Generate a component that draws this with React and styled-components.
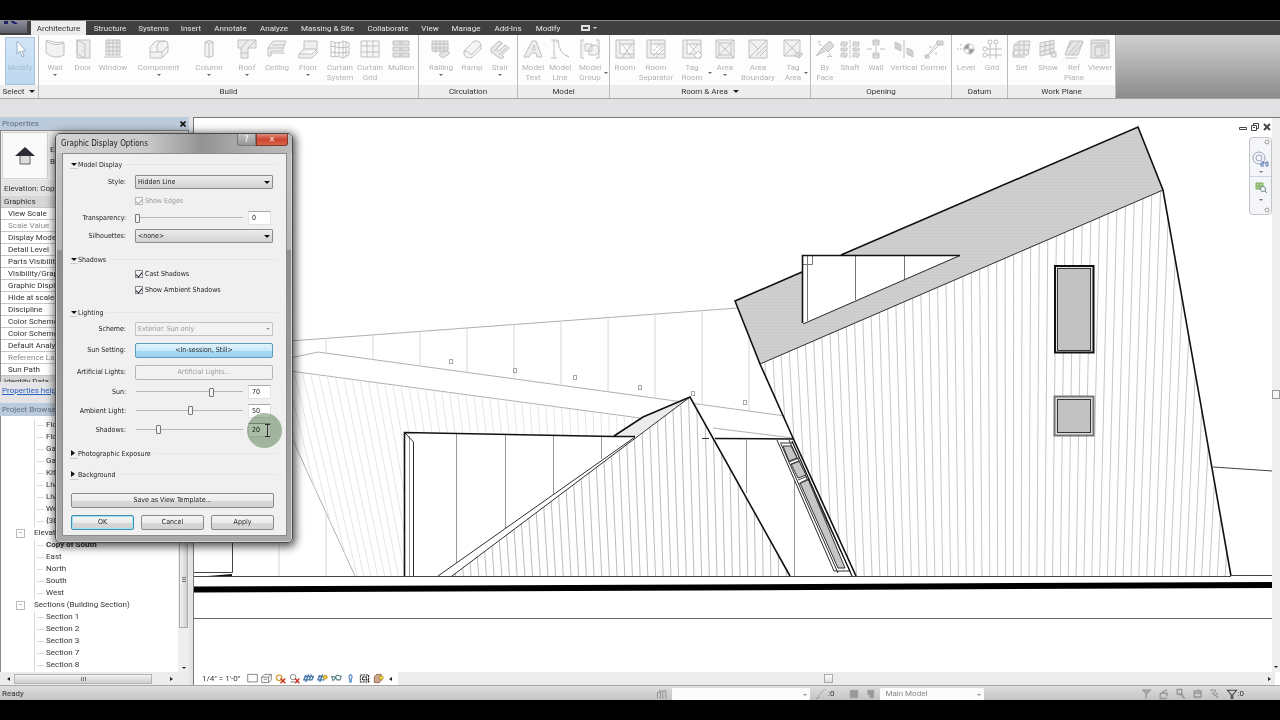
import React from 'react';
import styled, { createGlobalStyle, css } from 'styled-components';

const theme = {
  ui: "Roboto, 'Noto Sans', sans-serif",
  dialog: "'DejaVu Sans Condensed', 'Open Sans', sans-serif",
  disabled: '#b4b4b4',
  text: '#333',
  header: '#bccbdb',
};

const GlobalStyle = createGlobalStyle`
  * {
    box-sizing: border-box;
  }
  body {
    margin: 0;
    background: #000;
    color: ${theme.text};
    font: 8px/12px ${theme.ui};
  }
  button, input, select {
    margin: 0;
    padding: 0;
    border: none;
    border-radius: 0;
    background: none;
    color: inherit;
    font: inherit;
  }
  svg {
    display: block;
  }
`;

const Screen = styled.div`
  display: flex;
  flex-direction: column;
  min-height: 100vh;
  padding: 20px 0;
  overflow: hidden;
`;

/* ---------- ribbon ---------- */

const TabBar = styled.nav`
  display: flex;
  height: 15px;
  background: #404040;
  border-top: 1px solid #8a8a8a;
`;

const AppButton = styled.button`
  width: 27px;
  height: 12px;
  margin-right: 4px;
  overflow: hidden;
  background: linear-gradient(#8d8f9c, #5c5d66);
  svg {
    width: 27px;
    height: 12px;
  }
`;

const Tab = styled.button`
  flex: none;
  width: ${({ $width }) => $width}px;
  height: 14px;
  line-height: 15px;
  color: #e6e6e6;
  white-space: nowrap;
  ${({ $active }) =>
    $active &&
    css`
      color: #333;
      background: #ececec;
    `}
`;

const TabMenu = styled.button`
  display: flex;
  align-items: center;
  gap: 3px;
  margin-left: 12px;
  color: #ddd;
`;

const Ribbon = styled.div`
  display: flex;
  height: 64px;
  border-bottom: 1px solid #a6a6a8;
  background: linear-gradient(#d0d0d0, #8c8c8c);
`;

const Panel = styled.section`
  display: flex;
  flex-direction: column;
  flex: none;
  width: ${({ $width }) => $width}px;
  border-right: 1px solid #bcbcbc;
  background: #fdfdfd;
`;

const PanelTools = styled.div`
  display: flex;
  flex: 1;
  padding-left: ${({ $pad }) => $pad || 0}px;
`;

const PanelTitle = styled.div`
  display: flex;
  align-items: center;
  justify-content: center;
  gap: 5px;
  height: 13px;
  background: #ededed;
`;

const Tool = styled.button`
  position: relative;
  display: flex;
  flex: none;
  flex-direction: column;
  align-items: center;
  width: ${({ $width }) => $width}px;
  padding-top: 4px;
  color: ${theme.disabled};
  line-height: 10px;
  white-space: nowrap;
  svg {
    width: 20px;
    height: 20px;
    margin-bottom: 4px;
    fill: none;
    stroke: #c0c0c0;
  }
`;

const ModifyTool = styled(Tool)`
  height: 48px;
  margin: 2px 0 0 5px;
  padding-top: 1px;
  color: #a9bccf;
  border: 1px solid #a9c3dd;
  background: linear-gradient(#d3e5f7, #bdd8f0);
`;

const Caret = styled.i`
  width: 0;
  height: 0;
  border: ${({ $size }) => $size || 2}px solid transparent;
  border-bottom: none;
  border-top-color: ${({ $color }) => $color || '#222'};
`;

const ToolCaret = styled(Caret)`
  margin-top: 1px;
`;

const SideCaret = styled(Caret)`
  position: absolute;
  right: 0;
  top: 37px;
`;

const OptionsBar = styled.div`
  height: 18px;
  background: #e1e1e3;
`;

/* ---------- workspace ---------- */

const Workspace = styled.main`
  position: relative;
  display: flex;
  flex: 1;
  background: #e4e4e6;
`;

const SidePanel = styled.aside`
  display: flex;
  flex-direction: column;
  flex: none;
  width: 189px;
  margin-right: 4px;
`;

const PanelHeader = styled.header`
  display: flex;
  align-items: center;
  justify-content: space-between;
  flex: none;
  height: 13px;
  padding: 0 3px 0 2px;
  color: #5f6f80;
  background: ${theme.header};
  button {
    width: 6px;
    color: #222;
  }
`;

const Properties = styled.div`
  flex: none;
  height: 252px;
  overflow: hidden;
  border: 1px solid #8a8a8a;
  border-bottom: none;
  background: #fff;
`;

const TypeSelector = styled.div`
  display: flex;
  align-items: center;
  gap: 2px;
  height: 49px;
  padding-left: 1px;
  background: #ececec;
`;

const TypePreview = styled.button`
  display: grid;
  place-items: center;
  width: 46px;
  height: 47px;
  border: 1px solid #d4d4d4;
  background: #fafafa;
`;

const InstanceRow = styled.div`
  height: 16px;
  padding-left: 3px;
  line-height: 17px;
  background: #e4e4e4;
`;

const PropertyTable = styled.table`
  width: 100%;
  border-spacing: 0;
  table-layout: fixed;
`;

const PropertyCell = styled.th`
  height: 12px;
  padding: 0 0 0 7px;
  overflow: hidden;
  line-height: 11px;
  font-weight: normal;
  text-align: left;
  white-space: nowrap;
  color: ${({ $dim }) => ($dim ? '#8c8c8c' : theme.text)};
  border-bottom: 1px solid #c6c6c6;
  ${({ $group }) =>
    $group &&
    css`
      padding-left: 3px;
      background: #d6d6d6;
    `}
`;

const HelpBar = styled.div`
  flex: none;
  height: 21px;
  padding: 3px 2px;
  a {
    color: #2a5fc4;
  }
`;

const Tree = styled.div`
  display: flex;
  flex: 1;
  background: #fff;
  border-left: 1px solid #8a8a8a;
`;

const TreeList = styled.ul`
  flex: 1;
  margin: 0;
  padding: 3px 0 0 15px;
  list-style: none;
`;

const TreeItem = styled.li`
  display: flex;
  align-items: center;
  height: 12px;
  font-weight: ${({ $bold }) => ($bold ? 'bold' : 'normal')};
  &::before {
    content: '${({ $group }) => ($group ? '−' : '')}';
    width: ${({ $group }) => ($group ? 7 : 18)}px;
    height: ${({ $group }) => ($group ? 7 : 12)}px;
    margin-right: ${({ $group }) => ($group ? 9 : 2)}px;
    line-height: 5px;
    text-align: center;
    color: #999;
    border: 0 solid #bbb;
    border-width: ${({ $group }) => ($group ? '1px' : '0 1px 0 0')};
    border-right-color: ${({ $group }) => ($group ? '#bbb' : '#d8d8d8')};
  }
`;

const ItemLine = styled.span`
  width: 7px;
  margin-right: 2px;
  border-top: 1px solid #dcdcdc;
`;

const TreeScroll = styled.div`
  display: flex;
  flex-direction: column;
  align-items: center;
  width: 11px;
  padding-bottom: 3px;
  background: #eee;
  span {
    display: grid;
    place-items: center;
    width: 9px;
    height: 212px;
    margin-bottom: auto;
    padding-top: 114px;
    border: 1px solid #aaa;
    background: linear-gradient(90deg, #f4f4f4, #cfcfcf);
  }
`;

const Grip = styled.i`
  width: ${({ $tall }) => ($tall ? 4 : 5)}px;
  height: ${({ $tall }) => ($tall ? 5 : 4)}px;
  background: repeating-linear-gradient(
    ${({ $tall }) => ($tall ? '180deg' : '90deg')},
    #777 0 1px,
    transparent 1px 2px
  );
`;

const SideScroll = styled.div`
  display: flex;
  align-items: center;
  flex: none;
  height: 13px;
  padding: 0 14px 0 5px;
  background: #ececec;
  div {
    display: grid;
    place-items: center;
    width: 138px;
    height: 10px;
    margin: 0 auto 0 4px;
    border: 1px solid #b4b4b4;
    background: linear-gradient(#f2f2f2, #cecece);
  }
`;

const SideArrow = styled.i`
  width: 0;
  height: 0;
  border: 2px solid transparent;
  border-${({ $left }) => ($left ? 'right' : 'left')}: 3px solid #222;
`;

const View = styled.section`
  display: flex;
  flex-direction: column;
  flex: 1;
  min-width: 0;
  border: 1px solid #777;
  border-width: 1px 0 0 1px;
  background: #fff;
`;

const Sheet = styled.div`
  position: relative;
  display: flex;
  flex: 1;
`;

const Drawing = styled.svg`
  flex: 1;
  min-width: 0;
  width: 100%;
  height: auto;
`;

const ViewScroll = styled.div`
  display: flex;
  flex-direction: column;
  justify-content: space-between;
  align-items: center;
  flex: none;
  width: 8px;
  padding: 3px 0 4px;
  background: #eee;
  span {
    width: 8px;
    height: 9px;
    border: 1px solid #999;
    background: #f6f6f6;
  }
`;

const WindowButtons = styled.div`
  position: absolute;
  top: 5px;
  right: 9px;
  display: flex;
  gap: 4px;
  svg {
    width: 8px;
    height: 8px;
    fill: none;
    stroke: #444;
  }
`;

const NavBar = styled.div`
  position: absolute;
  top: 19px;
  right: 8px;
  width: 23px;
  height: 78px;
  border: 1px solid #c4c4c4;
  border-radius: 4px;
  background: #f4f5f8;
`;

const ViewBar = styled.div`
  display: flex;
  align-items: center;
  gap: 3px;
  flex: none;
  height: 13px;
  padding: 0 5px 0 8px;
  svg {
    width: 11px;
    height: 11px;
    fill: none;
    stroke: #555;
  }
`;

const Scale = styled.button`
  width: 42px;
  text-align: left;
  white-space: nowrap;
`;

const HorizontalTrack = styled.div`
  display: flex;
  align-items: center;
  flex: 1;
  height: 13px;
  margin-left: 3px;
  padding: 0 2px 0 426px;
  background: #ececec;
  span {
    width: 9px;
    height: 9px;
    margin-right: auto;
    border: 1px solid #aaa;
    background: linear-gradient(#fff, #ddd);
  }
`;

const StatusBar = styled.footer`
  display: flex;
  align-items: center;
  flex: none;
  height: 15px;
  padding: 2px 36px 0 2px;
  border-top: 1px solid #a8a8a8;
  background: linear-gradient(#dedede, #c4c4c4);
  svg {
    width: 12px;
    height: 12px;
    fill: none;
    stroke: #999;
  }
`;

const StatusText = styled.span`
  width: 654px;
`;

const StatusGroup = styled.div`
  display: flex;
  align-items: center;
  gap: ${({ $gap }) => $gap}px;
  margin-left: ${({ $left }) => $left};
`;

/* ---------- form parts ---------- */

const SelectBox = styled.div`
  position: relative;
  flex: none;
  width: ${({ $width }) => $width}px;
  height: 14px;
  select {
    width: 100%;
    height: 100%;
    padding-left: 2px;
    appearance: none;
    opacity: 1;
    border: 1px solid ${({ $dim }) => ($dim ? '#c2c2c2' : '#8c8c8c')};
    border-radius: 1px;
    color: ${({ $dim }) => ($dim ? '#999' : '#222')};
    background: ${({ $dim }) => ($dim ? '#f2f2f2' : 'linear-gradient(#ededed, #d2d2d2)')};
  }
  i {
    position: absolute;
    top: 6px;
    right: 3px;
  }
`;

const StatusSelect = styled(SelectBox)`
  height: 12px;
  select {
    padding-left: 5px;
    border: none;
    color: #888;
    background: #fbfbfb;
  }
`;

const Dialog = styled.div`
  position: absolute;
  top: 16px;
  left: 55px;
  width: 238px;
  padding: 0 5px 6px 6px;
  border: 1px solid #4a4a4a;
  border-radius: 5px;
  background: linear-gradient(#c4c4c4 0, #b4b4b4 115px, #8f8f8f 117px, #a9a9a9 100%);
  box-shadow: 1px 2px 8px 2px rgba(0, 0, 0, 0.65), inset 0 0 0 1px #d4d4d4;
  font-family: ${theme.dialog};
  font-size: 7px;
  color: #222;
`;

const TitleBar = styled.header`
  display: flex;
  height: 19px;
  margin: 0 -5px 0 -6px;
  padding: 0 4px 0 5px;
  border-radius: 4px 4px 0 0;
  background: linear-gradient(90deg, #d2d2d2 0, #cacaca 38%, #939393 62%, #a6a6a6 75%, #bcbcbc 100%);
  h1 {
    flex: 1;
    margin: 0;
    font-weight: normal;
    font-size: 8px;
    line-height: 20px;
  }
`;

const TitleButton = styled.button`
  width: ${({ $close }) => ($close ? 32 : 19)}px;
  height: 12px;
  line-height: 10px;
  font-weight: bold;
  font-size: 8px;
  color: #eee;
  border: 1px solid #777;
  border-top: none;
  border-radius: ${({ $close }) => ($close ? '0 0 3px 0' : '0 0 0 3px')};
  background: linear-gradient(#c0c0c0, #969696);
  ${({ $close }) =>
    $close &&
    css`
      background: linear-gradient(#dc8b7c 0, #cc4530 50%, #d9614a 100%);
      border-color: #7c3a30;
    `}
`;

const DialogBody = styled.form`
  display: flex;
  flex-direction: column;
  padding: 4px 6px 5px 5px;
  border: 1px solid #8b8b8b;
  background: #f0f0f0;
`;

const Group = styled.fieldset`
  min-width: 0;
  margin: 0 2px 8px;
  padding: 0;
  border: none;
`;

const GroupHead = styled.button`
  display: flex;
  align-items: center;
  width: 100%;
  height: 13px;
  white-space: nowrap;
  &::after {
    content: '';
    flex: 1;
    margin-left: 4px;
    border-top: 1px solid #e6e6e6;
  }
`;

const GroupMark = styled.i`
  width: 8px;
  margin-top: 2px;
  padding-bottom: 2px;
  border-bottom: 1px solid #ccc;
  &::before {
    content: '';
    display: block;
    width: 0;
    height: 0;
    margin-left: 1px;
    border: 3px solid transparent;
    ${({ $open }) =>
      $open
        ? 'border-bottom: none; border-top-color: #111;'
        : 'border-right: none; border-left: 4px solid #111;'}
  }
`;

const Row = styled.div`
  display: flex;
  align-items: center;
  height: ${({ $height }) => $height}px;
  > label:first-child {
    width: 56px;
    margin-right: 9px;
    text-align: right;
    white-space: nowrap;
  }
`;

const CheckRow = styled.div`
  display: flex;
  align-items: center;
  height: 16px;
  padding-left: 65px;
`;

const CheckLabel = styled.label`
  display: flex;
  align-items: center;
  gap: 2px;
  color: ${({ $dim }) => ($dim ? '#999' : 'inherit')};
  input {
    display: grid;
    place-items: center;
    width: 8px;
    height: 8px;
    appearance: none;
    border: 1px solid ${({ $dim }) => ($dim ? '#bbb' : '#888')};
    background: #f8f8f8;
  }
  input:checked::before {
    content: '';
    width: 3px;
    height: 5px;
    margin-top: -1px;
    border: solid ${({ $dim }) => ($dim ? '#aaa' : '#223')};
    border-width: 0 1px 1px 0;
    transform: rotate(40deg);
  }
`;

const Slider = styled.input`
  width: 110px;
  height: 12px;
  margin-right: 3px;
  appearance: none;
  background: linear-gradient(#b8b8b8, #b8b8b8) 1px 5px / 107px 1px no-repeat;
  &::-webkit-slider-thumb {
    width: 5px;
    height: 9px;
    appearance: none;
    border: 1px solid #777;
    border-radius: 1px;
    background: #f2f2f2;
  }
`;

const ValueBox = styled.input`
  width: 23px;
  height: 14px;
  padding-left: 3px;
  border: 1px solid #e3e3e3;
  border-top-color: #aaa;
  background: #fff;
`;

const PushButton = styled.button`
  flex: ${({ $wide }) => ($wide ? 'none' : 1)};
  width: ${({ $wide }) => ($wide ? $wide : 'auto')};
  height: 15px;
  line-height: 13px;
  border: 1px solid #8a8a8a;
  border-radius: 2px;
  background: linear-gradient(#f4f4f4 0, #ececec 50%, #d8d8d8 52%, #d2d2d2 100%);
  ${({ $kind }) =>
    $kind === 'default' &&
    css`
      border-color: #3f8fb0;
      box-shadow: inset 0 0 0 1px #a5dff2;
    `}
  ${({ $kind }) =>
    $kind === 'hot' &&
    css`
      border-color: #5e9cba;
      background: linear-gradient(#e4f4fc 0, #c8e9fa 50%, #a6d9f3 52%, #9fd4f0 100%);
    `}
  ${({ $kind }) =>
    $kind === 'disabled' &&
    css`
      color: #999;
      border-color: #b5b5b5;
      background: #f2f2f2;
    `}
`;

const Actions = styled.div`
  display: flex;
  flex-direction: column;
  gap: 7px;
  padding: 4px 6px 0 3px;
  div {
    display: flex;
    gap: 7px;
  }
`;

const Halo = styled.span`
  position: absolute;
  top: 279px;
  left: 191px;
  display: grid;
  place-items: center;
  width: 35px;
  height: 35px;
  border-radius: 50%;
  background: #abbfa8;
  mix-blend-mode: multiply;
  pointer-events: none;
  svg {
    margin-left: 5px;
  }
`;

/* ---------- icon drawings, all on a 20 x 20 grid ---------- */

const roomBox = <path d="M1 1h18v18H1zM5 1v14h14M5 5h14" fill="#f0f0f0" />;

const icons = {
  modify: <path d="M7 2v13l3-3 2 6 2-1-2-5h4z" fill="#fff" stroke="#9bb0c8" />,
  wall: <path d="M1 2q9 6 18 2v12q-9 5-18-2zM1 2q2-2 4 0q7 3 14 1" fill="#f2f2f2" />,
  door: <path d="M4 1h13v18H4zM4 1l8 4v14l-8-4zM10 11v2" fill="#ececec" />,
  window: <path d="M3 1h14v15H3zM3 8h14M10 1v15M6 1v15M14 1v15M3 4h14M3 12h14M1 18h18" fill="#ececec" />,
  component: <path d="M1 8l6-6h9q3 0 3 3v8l-6 6H1zM1 13h7V8q0-6 8-6M8 13l5 0v6M13 13l6-6" fill="#f2f2f2" />,
  column: <path d="M6 3q4-3 8 0v14q-4 3-8 0zM6 3q4 3 8 0M10 5v13" fill="#f4f4f4" />,
  roof: <path d="M1 1h18v8h-8v10H4V9H1zM4 9l7-8M11 9l8-8M4 14h7" fill="#ececec" />,
  ceiling: <path d="M1 9l5-7h13l-3 7zM1 9v8h3v-5h12V9M5 6h13M4 14h14" fill="#efefef" />,
  floor: <path d="M6 2h13v8l-5 5H1l5-5zM1 15v4h13l5-5v-4M6 10h13" fill="#efefef" />,
  curtainSystem: <path d="M1 2q8 4 12 0l6 2v12l-6 3q-6-3-12-1zM5 3v14M9 3v14M13 2v17M16 3v14M1 7q9 3 18 1M1 13q9 2 18 0" />,
  curtainGrid: <path d="M1 2h18v16H1zM7 2v16M13 2v16M1 7h18M1 13h18" fill="#f6f6f6" />,
  mullion: <path d="M2 2h7v4H2zM11 2h7v4h-7zM2 8h7v4H2zM11 8h7v4h-7zM2 14h7v4H2zM11 14h7v4h-7zM10 1v18" fill="#e2e2e2" />,
  railing: <path d="M1 2h16v10H1zM1 5h16M1 9h16M5 2v12M9 2v12M13 2v12M8 16l6-5 5 3-7 5z" fill="#e6e6e6" />,
  ramp: <path d="M2 12L12 2q6-1 7 4v4L9 19q-6 0-7-4zM2 12q5 0 7 4M9 16L19 6" fill="#f4f4f4" />,
  stair: <path d="M1 9l8-7 3 2-6 6 3 2 6-6 4 3-7 7 2 2-3 2-10-7zM4 12l9-8M9 16l7-7" fill="#e8e8e8" />,
  modelText: <path d="M1 18L9 2h4l6 16h-5l-1-4H8l-2 4zM9 11h3l-1-5z" fill="#eee" />,
  modelLine: <path d="M4 1v18M1 1h6M1 19h6M8 1q1 14 11 17M8 1l-2 3M19 18l-3-2" />,
  modelGroup: <path d="M4 1H1v18h3M16 1h3v18h-3M5 5h7v7H5zM9 10a5 5 0 1 1 4 6h-4z" fill="#f2f2f2" />,
  room: <g>{roomBox}<path d="M7 5l10 14M17 5L7 19" /></g>,
  separator: <g>{roomBox}<path d="M7 17L17 7M9 19l9-9M7 12l7-7" strokeDasharray="3 1" /></g>,
  tagRoom: <g>{roomBox}<path d="M7 5l8 10M16 5l-8 10M12 16l4-4 4 4-4 4z" fill="#fff" /></g>,
  area: <path d="M1 1h18v18H1zM4 4h12v12H4zM1 1l18 18M19 1L1 19" fill="#f0f0f0" />,
  boundary: <path d="M1 1h18v18H1zM1 1l9 9M1 19L19 1M8 17L18 7M12 17l6-6" fill="#f0f0f0" />,
  tagArea: <path d="M1 1h16v16H1zM1 1l16 16M17 1L1 17M11 16l4-3 5 2-4 4z" fill="#f0f0f0" />,
  byFace: <path d="M1 17L7 9l3 3zM8 8l7-6 4 5-6 6zM3 4l4 3M13 14l4 4M3 2l3 1M12 18l4-1" fill="#ddd" />,
  shaft: <path d="M1 3h6v4H1zM1 9h6v3H1zM1 14h6v4H1zM13 3h6v4h-6zM13 9h6v3h-6zM13 14h6v4h-6zM10 1v18" fill="#ddd" strokeDasharray="4 1" />,
  wallOpening: <path d="M7 1h6v5H7zM7 14h6v5H7zM7 3h6M7 16h6M1 10h5M14 10h5M10 7v6" fill="#e2e2e2" />,
  vertical: <path d="M1 3l6 3v6L1 9zM13 9l6 3v6l-6-3zM10 1v18M3 4v6M5 5v6M15 10v6M17 11v6" fill="#e2e2e2" />,
  dormer: <path d="M2 18L14 3M6 15L17 4M1 16v3h4v-3zM13 2h6v4h-6zM8 8H5M12 13v3" fill="#ddd" />,
  level: <g><path d="M1 10h7M5 5v3" strokeDasharray="2 1" /><circle cx="13" cy="10" r="5" fill="#fff" /><path d="M13 5a5 5 0 0 0-5 5h5zM13 15a5 5 0 0 0 5-5h-5z" fill="#999" /></g>,
  grid: (
    <g>
      <path d="M8 5v15M14 5v15M5 10h15M5 16h15" />
      <circle cx="8" cy="3" r="2" />
      <circle cx="14" cy="3" r="2" />
      <circle cx="3" cy="10" r="2" />
      <circle cx="3" cy="16" r="2" />
    </g>
  ),
  set: <path d="M2 6l5-4h11l-2 14H2zM2 11h15M7 2v14M12 2v14M2 6h15M1 12v6h12" fill="#ececec" />,
  show: <path d="M2 4l14-3v13L2 17zM7 3v13M12 2v13M2 8l14-3M2 13l14-4M12 13h6v5h-4z" fill="#ececec" />,
  refPlane: <path d="M1 16L6 2h13l-5 14zM4 16L16 2M8 16L19 4M4 9l5-7M1 19h12" fill="#e6e6e6" />,
  viewer: <path d="M1 1h18v18H1zM1 4h18M5 8l3-2h7v9l-3 2H5zM5 8h7v9M12 8l3-2" fill="#e6e6e6" />,
};

const Icon = ({ name }) => (
  <svg viewBox="0 0 20 20" aria-hidden="true">
    {icons[name]}
  </svg>
);

const tabs = [
  ['Architecture', 55],
  ['Structure', 48],
  ['Systems', 39],
  ['Insert', 36],
  ['Annotate', 43],
  ['Analyze', 44],
  ['Massing & Site', 63],
  ['Collaborate', 58],
  ['View', 26],
  ['Manage', 46],
  ['Add-Ins', 38],
  ['Modify', 42],
];

// tool: [icon, width, label lines, has drop-down]
const panels = [
  {
    title: 'Build',
    width: 380,
    tools: [
      ['wall', 32, ['Wall'], true],
      ['door', 24, ['Door']],
      ['window', 36, ['Window']],
      ['component', 55, ['Component'], true],
      ['column', 46, ['Column'], true],
      ['roof', 30, ['Roof'], true],
      ['ceiling', 30, ['Ceiling']],
      ['floor', 32, ['Floor'], true],
      ['curtainSystem', 32, ['Curtain', 'System']],
      ['curtainGrid', 28, ['Curtain', 'Grid']],
      ['mullion', 34, ['Mullion']],
    ],
  },
  {
    title: 'Circulation',
    width: 99,
    pad: 6,
    tools: [
      ['railing', 32, ['Railing'], true],
      ['ramp', 30, ['Ramp']],
      ['stair', 26, ['Stair'], true],
    ],
  },
  {
    title: 'Model',
    width: 92,
    tools: [
      ['modelText', 30, ['Model', 'Text']],
      ['modelLine', 24, ['Model', 'Line']],
      ['modelGroup', 36, ['Model', 'Group'], true],
    ],
  },
  {
    title: 'Room & Area',
    width: 201,
    menu: true,
    tools: [
      ['room', 30, ['Room']],
      ['separator', 32, ['Room', 'Separator']],
      ['tagRoom', 40, ['Tag', 'Room'], true],
      ['area', 26, ['Area'], true],
      ['boundary', 40, ['Area', 'Boundary']],
      ['tagArea', 30, ['Tag', 'Area'], true],
    ],
  },
  {
    title: 'Opening',
    width: 141,
    tools: [
      ['byFace', 28, ['By', 'Face']],
      ['shaft', 22, ['Shaft']],
      ['wallOpening', 30, ['Wall']],
      ['vertical', 26, ['Vertical']],
      ['dormer', 34, ['Dormer']],
    ],
  },
  {
    title: 'Datum',
    width: 56,
    tools: [
      ['level', 28, ['Level']],
      ['grid', 24, ['Grid']],
    ],
  },
  {
    title: 'Work Plane',
    width: 108,
    tools: [
      ['set', 27, ['Set']],
      ['show', 26, ['Show']],
      ['refPlane', 26, ['Ref', 'Plane']],
      ['viewer', 26, ['Viewer']],
    ],
  },
];

const properties = [
  ['Graphics', 'group'],
  ['View Scale'],
  ['Scale Value', 'dim'],
  ['Display Model'],
  ['Detail Level'],
  ['Parts Visibility'],
  ['Visibility/Graphics Overrides'],
  ['Graphic Display Options'],
  ['Hide at scales coarser than'],
  ['Discipline'],
  ['Color Scheme Location'],
  ['Color Scheme'],
  ['Default Analysis Display Style'],
  ['Reference Label', 'dim'],
  ['Sun Path'],
  ['Identity Data', 'group'],
];

const views = [
  ['Floor'],
  ['Floor'],
  ['Garage'],
  ['Garage'],
  ['Kitchen'],
  ['Living'],
  ['Living'],
  ['West'],
  ['{3D}'],
  ['Elevations', 'group'],
  ['Copy of South', 'bold'],
  ['East'],
  ['North'],
  ['South'],
  ['West'],
  ['Sections (Building Section)', 'group'],
  ['Section 1'],
  ['Section 2'],
  ['Section 3'],
  ['Section 7'],
  ['Section 8'],
];

const RibbonTool = ({ tool: [icon, width, lines, menu] }) => (
  <Tool $width={width}>
    <Icon name={icon} />
    {lines.map(line => (
      <span key={line}>{line}</span>
    ))}
    {menu && lines.length === 1 && <ToolCaret $color="#666" />}
    {menu && lines.length > 1 && <SideCaret $color="#666" />}
  </Tool>
);

const RibbonBar = () => (
  <>
    <TabBar>
      <AppButton aria-label="Application menu">
        <svg viewBox="0 0 27 12" aria-hidden="true">
          <path d="M4 0v3h4V0zM10 0l4 3h4l-4-3z" fill="#20206c" />
        </svg>
      </AppButton>
      {tabs.map(([name, width], i) => (
        <Tab key={name} $width={width} $active={i === 0}>
          {name}
        </Tab>
      ))}
      <TabMenu aria-label="Ribbon display">
        <svg width="9" height="6" viewBox="0 0 9 6" aria-hidden="true">
          <rect x="1" y="1" width="7" height="4" fill="none" stroke="#ddd" strokeWidth="2" />
        </svg>
        <Caret $color="#ddd" />
      </TabMenu>
    </TabBar>
    <Ribbon>
      <Panel $width={39}>
        <PanelTools>
          <ModifyTool $width={30}>
            <Icon name="modify" />
            <span>Modify</span>
          </ModifyTool>
        </PanelTools>
        <PanelTitle>
          Select <Caret $size={3} />
        </PanelTitle>
      </Panel>
      {panels.map(panel => (
        <Panel key={panel.title} $width={panel.width}>
          <PanelTools $pad={panel.pad}>
            {panel.tools.map(tool => (
              <RibbonTool key={tool[0]} tool={tool} />
            ))}
          </PanelTools>
          <PanelTitle>
            {panel.title}
            {panel.menu && <Caret $size={3} />}
          </PanelTitle>
        </Panel>
      ))}
    </Ribbon>
  </>
);

const LeftPanels = () => (
  <SidePanel>
    <PanelHeader>
      Properties
      <button aria-label="Close">
        <svg width="6" height="6" viewBox="0 0 6 6" stroke="#111" strokeWidth="1.6">
          <path d="M0.5 0.5l5 5M5.5 0.5l-5 5" />
        </svg>
      </button>
    </PanelHeader>
    <Properties>
      <TypeSelector>
        <TypePreview aria-label="Elevation type">
          <svg width="20" height="18" viewBox="0 0 20 18">
            <path d="M5 8h10v9H5z" fill="#ddd" stroke="#666" />
            <path d="M10 0l10 9H0z" fill="#2c2c34" />
          </svg>
        </TypePreview>
        <span>
          Elevation
          <br />
          Building
        </span>
      </TypeSelector>
      <InstanceRow>Elevation: Copy of South</InstanceRow>
      <PropertyTable>
        <tbody>
          {properties.map(([name, kind]) => (
            <tr key={name}>
              <PropertyCell scope="row" $group={kind === 'group'} $dim={kind === 'dim'}>
                {name}
              </PropertyCell>
            </tr>
          ))}
        </tbody>
      </PropertyTable>
    </Properties>
    <HelpBar>
      <a href="#help">Properties help</a>
    </HelpBar>
    <PanelHeader>Project Browser</PanelHeader>
    <Tree>
      <TreeList>
        {views.map(([name, kind], i) => (
          <TreeItem key={i} $group={kind === 'group'} $bold={kind === 'bold'}>
            {kind !== 'group' && <ItemLine />}
            {name}
          </TreeItem>
        ))}
      </TreeList>
      <TreeScroll>
        <span>
          <Grip $tall />
        </span>
        <Caret />
      </TreeScroll>
    </Tree>
    <SideScroll>
      <SideArrow $left />
      <div>
        <Grip />
      </div>
      <SideArrow />
    </SideScroll>
  </SidePanel>
);

/* ---------- the elevation ---------- */

const range = (from, to, step) => {
  const out = [];
  for (let x = from; x <= to; x += step) out.push(x);
  return out;
};

// siding boards: each line leans in proportion to its distance from `upright`
const Siding = ({ from, to, step, upright, lean, clip, color }) => (
  <g clipPath={`url(#${clip})`} stroke={color}>
    {range(from, to, step).map(x => {
      const slope = (upright - x) * lean;
      return <line key={x} x1={x - slope * 260} y1="120" x2={x + slope * 196} y2="576" />;
    })}
  </g>
);

const backTop = x => 341 - (x - 290) * 0.0737;
const backBottom = x => 352 + (x - 318) * 0.137;

const Elevation = () => (
  <Drawing viewBox="194 118 1078 554" role="img" aria-label="South elevation" fill="none" stroke="#111">
    <defs>
      <clipPath id="big">
        <path d="M760 364L1163 190L1231 576H856z" />
      </clipPath>
      <clipPath id="gable">
        <path d="M452 576L690 397L790 576z" />
      </clipPath>
      <clipPath id="left">
        <path d="M290 371L637 418L614 436L404 432V576H355L290 434z" />
      </clipPath>
      <pattern id="roof" width="3" height="3" patternUnits="userSpaceOnUse">
        <rect width="3" height="3" fill="#cfcfcf" stroke="none" />
        <path d="M0 3L3 2" stroke="#cacaca" />
      </pattern>
    </defs>

    <g stroke="#b0b0b0">
      <path d="M290 341L738 308M290 358L318 352L785 416M290 371L640 418M713 428L793 438" />
      <path d="M290 434L355 576" />
    </g>
    <g stroke="#d8d8d8">
      {range(326, 750, 47).map(x => (
        <line key={x} x1={x} y1={backTop(x)} x2={x} y2={backBottom(x)} />
      ))}
      <path d="M326 512V576M279 540V576" />
    </g>
    <Siding from={200} to={640} step={8} upright={640} lean={0.0007} clip="left" color="#e6e6e6" />
    <g stroke="#a8a8a8">
      {[[449, 359], [513, 368], [573, 375], [638, 385], [691, 391], [743, 400]].map(([x, y]) => (
        <rect key={x} x={x + 0.5} y={y + 0.5} width="3" height="4" />
      ))}
    </g>

    <path d="M404 433L635 437L438 576H404z" fill="#fff" stroke="none" />
    <g stroke="#999">
      <path d="M456.5 433V563M505.5 434V528M553.5 435V494M601.5 436V459M409.5 436V576" />
    </g>
    <path d="M614 436L643 417L690 397L635 437z" fill="#ececec" stroke="none" />
    <path d="M452 576L690 397L790 576z" fill="#fff" stroke="none" />
    <Siding from={440} to={800} step={8} upright={840} lean={0.0002} clip="gable" color="#bdbdbd" />
    <path d="M405 433L413.5 442V576M438 576L635 437M452 576L690 397M702 438.5H709" stroke="#2c2c2c" />
    <path
      d="M404.5 576V432.5L614 436.5H635M614 436L643 417L690 397L790 576M715 438.5L793 439"
      strokeWidth="1.6"
    />
    <path d="M746.5 440V493M794.5 480V576" stroke="#999" />

    <path d="M777 440L834 571H850M781 444L838 573M780 443H793M789 440L850 571" stroke="#2c2c2c" />
    <g fill="#c6c6c6" stroke="#333">
      <path d="M783 446H791L797 458L789 461zM791 464L799 461L806 475L798 478zM800 483L808 479L845 568H838z" />
    </g>
    <path d="M789 462L799 458M790 465L800 461M798 480L808 476M799 484L810 479" stroke="#444" />

    <Siding from={700} to={1240} step={8.25} upright={1010} lean={0.00025} clip="big" color="#c6c6c6" />
    <path d="M735 301L1138 127L1163 190L760 364z" fill="url(#roof)" stroke="none" />
    <path d="M802 255H960L802 324zM802 272V240L841 250V255z" fill="#fff" stroke="none" />
    <path d="M760 364L1163 190M803 324L960 255.500" stroke="#2c2c2c" />
    <path d="M807.5 256V321M803 264.5H812.500V256M855.5 256V300M904.5 256V279" stroke="#777" />
    <path
      d="M841 255L1138 127L1163 190L1231 576M960 255.500H802.500V323M802 272L735 301L760 364L793 438L856 576"
      strokeWidth="1.6"
    />
    <path d="M792 441L852 576" strokeWidth="1.2" />

    <rect x="1055" y="266" width="38.500" height="86.500" fill="#e4e4e4" strokeWidth="2" />
    <rect x="1057.500" y="268.500" width="33" height="82" fill="#c2c2c2" stroke="#333" />
    <rect x="1054.500" y="396.500" width="39" height="39" fill="#ddd" stroke="#777" strokeWidth="2" />
    <rect x="1057.500" y="399.500" width="33" height="33" fill="#c2c2c2" stroke="#333" />

    <path d="M1213 467L1280 471.500M1231 575.500H1280M194 572.500H232.500V540M194 576.500H1231" stroke="#444" />
    <path d="M208 576L232 574V576z" fill="#111" stroke="none" />
    <path d="M194 589.500L1280 585" stroke="#000" strokeWidth="6" />
    <path d="M194 618.500H1280" stroke="#666" />
  </Drawing>
);

const viewIcons = [
  <path d="M1 2h14v11H1z" />,
  <path d="M1 6l4-4h10v8l-4 4H1zM1 6h10v8M11 6l4-4M4 9h5" />,
  <g><circle cx="6" cy="7" r="4" stroke="#d9a03c" strokeWidth="2" /><path d="M8 8l7 7M15 8l-7 7" stroke="#c8321e" strokeWidth="2" /></g>,
  <g><circle cx="6" cy="6" r="4" /><path d="M2 13h7" /><path d="M9 8l6 7M15 8l-6 7" stroke="#c8321e" strokeWidth="2" /></g>,
  <path d="M1 11l3-8M4 13l4-11M4 5h11l-2 5H2M9 10l3-8" stroke="#4478a8" strokeWidth="2" />,
  <g><path d="M1 11l3-8M4 13l4-11M2 10h9M4 5h5" stroke="#4478a8" strokeWidth="2" /><circle cx="12" cy="6" r="3" fill="#e6c040" stroke="#b89020" /></g>,
  <path d="M1 5l5 1 3-3 6 2-2 5H9L7 7 3 11z" stroke="#4e7f80" strokeWidth="1.500" />,
  <path d="M8 2q4 3 1 7v4H7V9Q4 5 8 2z" stroke="#3b78c0" strokeWidth="1.500" />,
  <path d="M2 3h12v10H2zM5 6h6v4H5zM10 8l5 5" stroke="#222" strokeWidth="1.500" strokeDasharray="3 1" />,
  <g><path d="M2 5l3-3h7v9l-3 3H2z" fill="#c9a88c" stroke="#804030" /><circle cx="12" cy="7" r="3" fill="#e9cf50" stroke="#a58a20" /></g>,
];

const statusIcons = [
  'M2 2l5 6 6-6M7 8v6M4 3h7M5 6h5',
  'M12 2L3 8v6h9M6 7h6v4',
  'M3 2h6v6H3zM7 7l6 7M5 9h5v4',
  'M3 4h9v8H3zM8 2l5 5M6 12v2M4 7h7',
  'M2 3h4M8 2v4M4 6l8 7M11 6v3',
];

const ViewArea = () => (
  <View>
    <Sheet>
      <Elevation />
      <ViewScroll>
        <Caret $color="transparent" />
        <span />
        <Caret />
      </ViewScroll>
      <WindowButtons>
        <svg viewBox="0 0 8 8"><path d="M0.500 4.500h7v2h-7z" /></svg>
        <svg viewBox="0 0 8 8"><path d="M2.500 2.500v-2h5v5h-2M0.500 2.500h5v5h-5zM2 4.500h2" /></svg>
        <svg viewBox="0 0 8 8"><path d="M1 1l6 6M7 1L1 7" strokeWidth="2" /></svg>
      </WindowButtons>
      <NavBar>
        <svg width="21" height="76" viewBox="0 0 21 76" fill="none" stroke="#9a9a9a">
          <circle cx="17" cy="4" r="2" />
          <circle cx="9" cy="20" r="6" stroke="#98a3bb" />
          <circle cx="9" cy="20" r="3" stroke="#98a3bb" />
          <path d="M11 24h3v2h-3v2h3M16 24h2v4h-2z" stroke="#5573b5" />
          <path d="M0 38.500h21" stroke="#ccd4e6" />
          <path d="M6 45h7v6H6zM6 48h7M9 45v6" stroke="#7fae5c" fill="#b5d49c" />
          <circle cx="13" cy="51" r="2.500" fill="#fff" stroke="#688" />
          <path d="M15 53l2 2" stroke="#688" />
          <path d="M9 33h4l-2 2zM9 61h4l-2 2z" fill="#777" stroke="none" />
          <circle cx="17" cy="72" r="2" />
        </svg>
      </NavBar>
    </Sheet>
    <ViewBar>
      <Scale>1/4" = 1'-0"</Scale>
      {viewIcons.map((shape, i) => (
        <svg key={i} viewBox="0 0 16 16" aria-hidden="true">
          {shape}
        </svg>
      ))}
      <SideArrow $left />
      <HorizontalTrack>
        <span />
        <SideArrow />
      </HorizontalTrack>
    </ViewBar>
  </View>
);

const Combo = ({ id, value, width = 138, dim, as: Box = SelectBox }) => (
  <Box $width={width} $dim={dim}>
    <select id={id} defaultValue={value} disabled={dim} aria-label={id ? undefined : value || 'Workset'}>
      <option>{value}</option>
    </select>
    <Caret $size={dim ? 2 : 3} $color={dim ? '#999' : '#111'} />
  </Box>
);

const Check = ({ label, dim }) => (
  <CheckRow>
    <CheckLabel $dim={dim}>
      <input type="checkbox" defaultChecked disabled={dim} />
      {label}
    </CheckLabel>
  </CheckRow>
);

const SliderRow = ({ label, id, value, height = 18 }) => (
  <Row $height={height}>
    <label htmlFor={id}>{label}:</label>
    <Slider id={id} type="range" defaultValue={value} />
    <ValueBox type="text" defaultValue={value} aria-label={`${label} value`} />
  </Row>
);

const Head = ({ open, children }) => (
  <GroupHead type="button" aria-expanded={!!open}>
    <GroupMark $open={open} />
    {children}
  </GroupHead>
);

const DisplayOptions = () => (
  <Dialog role="dialog" aria-label="Graphic Display Options">
    <TitleBar>
      <h1>Graphic Display Options</h1>
      <TitleButton aria-label="Help">?</TitleButton>
      <TitleButton $close aria-label="Close">✕</TitleButton>
    </TitleBar>
    <DialogBody>
      <Group>
        <Head open>Model Display</Head>
        <Row $height={22}>
          <label htmlFor="style">Style:</label>
          <Combo id="style" value="Hidden Line" />
        </Row>
        <Check label="Show Edges" dim />
        <SliderRow label="Transparency" id="transparency" value={0} />
        <Row $height={18}>
          <label htmlFor="silhouettes">Silhouettes:</label>
          <Combo id="silhouettes" value="<none>" />
        </Row>
      </Group>
      <Group>
        <Head open>Shadows</Head>
        <Check label="Cast Shadows" />
        <Check label="Show Ambient Shadows" />
      </Group>
      <Group>
        <Head open>Lighting</Head>
        <Row $height={20}>
          <label htmlFor="scheme">Scheme:</label>
          <Combo id="scheme" value="Exterior: Sun only" dim />
        </Row>
        <Row $height={22}>
          <label htmlFor="sun-setting">Sun Setting:</label>
          <PushButton id="sun-setting" type="button" $wide="138px" $kind="hot">
            &lt;In-session, Still&gt;
          </PushButton>
        </Row>
        <Row $height={22}>
          <label htmlFor="artificial">Artificial Lights:</label>
          <PushButton id="artificial" type="button" $wide="138px" $kind="disabled">
            Artificial Lights...
          </PushButton>
        </Row>
        <SliderRow label="Sun" id="sun" value={70} />
        <SliderRow label="Ambient Light" id="ambient" value={50} height={19} />
        <SliderRow label="Shadows" id="shadows" value={20} height={19} />
      </Group>
      <Group>
        <Head>Photographic Exposure</Head>
      </Group>
      <Group>
        <Head>Background</Head>
      </Group>
      <Actions>
        <PushButton type="button" $wide="100%">Save as View Template...</PushButton>
        <div>
          <PushButton type="button" $kind="default">OK</PushButton>
          <PushButton type="button">Cancel</PushButton>
          <PushButton type="button">Apply</PushButton>
        </div>
      </Actions>
    </DialogBody>
    <Halo>
      <svg width="5" height="13" viewBox="0 0 5 13" stroke="#333" fill="none">
        <path d="M0 0.500h5M2.500 0v13M0 12.500h5" />
      </svg>
    </Halo>
  </Dialog>
);

const App = () => (
  <>
    <GlobalStyle />
    <Screen>
      <RibbonBar />
      <OptionsBar />
      <Workspace>
        <LeftPanels />
        <ViewArea />
        <DisplayOptions />
      </Workspace>
      <StatusBar>
        <StatusText>Ready</StatusText>
        <StatusGroup $gap={4} $left="0">
          <svg viewBox="0 0 16 16"><path d="M2 14V6h4v8M9 14V4h4v10M4 6L12 3M5 2v3" strokeWidth="1.500" /></svg>
          <Combo as={StatusSelect} width={138} value="" dim />
        </StatusGroup>
        <StatusGroup $gap={1} $left="5px">
          <svg viewBox="0 0 16 16"><path d="M2 14L12 2M6 12l-5 3M13 2h2" /></svg>
          :0
        </StatusGroup>
        <StatusGroup $gap={4} $left="14px">
          <svg viewBox="0 0 16 16"><path d="M3 3h10v10H3zM3 6h10M3 10h10" fill="#999" /></svg>
          <svg viewBox="0 0 16 16"><path d="M5 3h8v10H8V9H5z" fill="#999" /></svg>
          <Combo as={StatusSelect} width={104} value="Main Model" dim />
        </StatusGroup>
        <StatusGroup $gap={5} $left="auto">
          {statusIcons.map(d => (
            <svg key={d} viewBox="0 0 16 16" strokeWidth="2">
              <path d={d} />
            </svg>
          ))}
          <svg viewBox="0 0 16 16"><path d="M2 3h12L9 9v5H7V9z" stroke="#444" strokeWidth="1.500" /></svg>
        </StatusGroup>
        :0
      </StatusBar>
    </Screen>
  </>
);

export default App;
